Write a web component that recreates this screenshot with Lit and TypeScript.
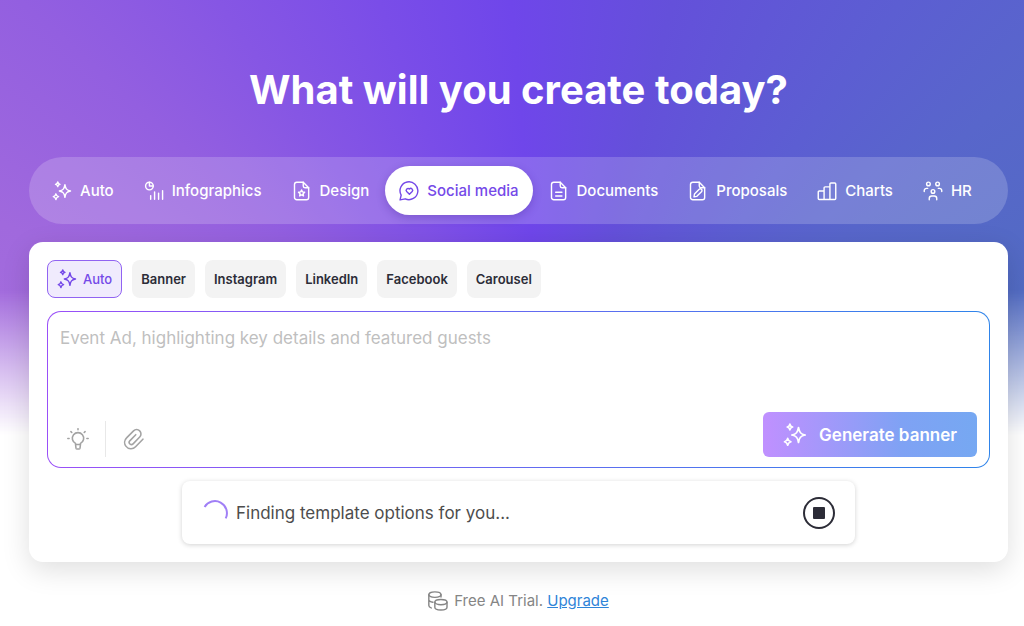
import { LitElement, html, css, svg, type TemplateResult } from "lit";
import { customElement, state } from "lit/decorators.js";
import { classMap } from "lit/directives/class-map.js";

const sparkle = svg`
  <path d="M15.500 4.500c.9 5 2.100 6.500 6.700 7.500-4.600 1-5.800 2.500-6.700 7.500-.9-5-2.100-6.500-6.700-7.500 4.600-1 5.800-2.500 6.700-7.500z"/>
  <path d="M6.900 1.200c.4 1.900.9 2.400 2.700 2.800-1.800.4-2.300.9-2.700 2.800-.4-1.900-.9-2.400-2.700-2.800 1.800-.4 2.300-.9 2.700-2.800z"/>
  <path d="M4.700 15.400c.5 2.300 1.200 2.900 3.200 3.400-2 .5-2.700 1.100-3.200 3.400-.5-2.300-1.200-2.900-3.200-3.400 2-.5 2.700-1.100 3.200-3.400z"/>`;

const page = svg`
  <path d="M13.500 1.500H5.700A2.700 2.700 0 0 0 3 4.200v15.600a2.700 2.700 0 0 0 2.700 2.700h11.600a2.700 2.700 0 0 0 2.700-2.700V8z"/>
  <path d="M13.500 1.500V6a2 2 0 0 0 2 2H20"/>`;

const icons: Record<string, TemplateResult<2>> = {
  auto: sparkle,
  infographics: svg`
    <circle cx="6.500" cy="6" r="4.600"/><path d="M6.500 1.400V6h4.600"/>
    <path d="M8 17.500V22M12.700 13v9M17.500 14.500V22M22.300 11.500V22"/>`,
  design: svg`${page}
    <path d="M11.500 10.800l1.100 2.300 2.600.4-1.900 1.800.5 2.600-2.300-1.200-2.300 1.200.5-2.600-1.900-1.800 2.600-.4z"/>`,
  social: svg`
    <path d="M1.300 22.700l1.300-5.800A10.700 10.700 0 1 1 7.500 21.400z"/>
    <path d="M12.500 16l-3.300-3.300a2.200 2.200 0 0 1 3.300-3 2.200 2.200 0 0 1 3.300 3z"/>`,
  documents: svg`${page}<path d="M8 13.500h7.500M8 18h7.500"/>`,
  proposals: svg`${page}
    <path d="M7.200 19l.6-3.400 5.600-5.600a1.900 1.900 0 0 1 2.800 2.800l-5.600 5.600z"/>`,
  charts: svg`
    <path d="M8.500 22.200V8.200A1.200 1.200 0 0 1 9.700 7h5.800M8.500 12H2.700a1.200 1.200 0 0 0-1.200 1.200V21a1.200 1.200 0 0 0 1.200 1.200h18.600a1.200 1.200 0 0 0 1.200-1.200V3.500a1.200 1.200 0 0 0-1.200-1.200h-4.600a1.200 1.200 0 0 0-1.200 1.200v18.700"/>`,
  hr: svg`
    <circle cx="6.500" cy="3.500" r="2.200"/><circle cx="17.500" cy="3.500" r="2.200"/><circle cx="12" cy="12.500" r="2.200"/>
    <path d="M1.500 12.500v-1a2.700 2.700 0 0 1 2.700-2.700h1.500M22.500 12.500v-1a2.700 2.700 0 0 0-2.700-2.700h-1.500M7.500 22.500V21a3 3 0 0 1 3-3h3a3 3 0 0 1 3 3v1.500"/>`,
  bulb: svg`
    <path d="M9.300 18v-1.200a6.200 6.200 0 1 1 5.400 0V18zM9.300 18l.5 4a1.300 1.300 0 0 0 1.300 1h1.800a1.300 1.300 0 0 0 1.300-1l.5-4"/>
    <path d="M12 .8v1.200M4.300 4l.9.900M19.700 4l-.9.900M.9 11.500h1.400M21.700 11.500h1.400"/>`,
  clip: svg`
    <path d="M22.800 12.200l-8 8.300a6.900 6.900 0 0 1-10.600-.7 6.900 6.900 0 0 1 .8-9l7.600-7.700a4.700 4.700 0 0 1 6.700 0 4.700 4.700 0 0 1 0 6.700l-7.200 7.500a2.400 2.400 0 0 1-3.600-3.300l6.500-6.700"/>`,
  coins: svg`
    <ellipse cx="8.300" cy="4.300" rx="7.300" ry="3.300"/>
    <path d="M1 4.300v13.200c0 1.300 1 2.200 2.800 2.800M1 10.500c0 1.500 2 2.600 5 3M15.600 4.300v3"/>
    <ellipse cx="15.500" cy="13.300" rx="7.300" ry="3.200"/>
    <path d="M8.200 13.300v6.200c0 1.900 3.300 3.300 7.300 3.300s7.300-1.400 7.300-3.300v-6.200"/>`,
};

const icon = (name: string, size = "md") =>
  html`<svg class="icon ${size}" viewBox="0 0 24 24" aria-hidden="true">${icons[name]}</svg>`;

@customElement("app-root")
export class AppRoot extends LitElement {
  @state() private category = "social";
  @state() private format = "Auto";

  private categories = [
    ["auto", "Auto"],
    ["infographics", "Infographics"],
    ["design", "Design"],
    ["social", "Social media"],
    ["documents", "Documents"],
    ["proposals", "Proposals"],
    ["charts", "Charts"],
    ["hr", "HR"],
  ];

  private formats = ["Auto", "Banner", "Instagram", "LinkedIn", "Facebook", "Carousel"];

  static styles = css`
    :host {
      display: block;
      position: relative;
      min-height: 100vh;
      box-sizing: border-box;
      padding: 64px 16px 12px 29px;
      background: #fff;
      font-family: Inter, "Liberation Sans", sans-serif;
      overflow: hidden;
    }
    *, *::before { box-sizing: border-box; }
    :host::before {
      content: "";
      position: absolute;
      inset: 0 0 auto 0;
      height: 440px;
      background: conic-gradient(from -90deg at 54% 480px,
        #a870dc 0deg, #a069dd 25deg, #935fe0 42deg, #8656e4 55deg, #7a4de8 70deg, #6f46ea 85deg,
        #6450da 104deg, #5c5ed2 126deg, #5866cb 140deg, #526bc3 158deg, #4f6cc0 180deg, #a870dc 360deg);
      mask-image: linear-gradient(#000 290px, transparent 435px);
    }
    button { font: inherit; border: 0; margin: 0; cursor: pointer; }
    main { position: relative; }
    h1 {
      margin: 0 0 41px;
      font-size: 40px;
      line-height: 52px;
      font-weight: 700;
      text-align: center;
      color: #fff;
    }
    .icon {
      flex: none;
      fill: none;
      stroke: currentColor;
      stroke-width: 1.7;
      stroke-linecap: round;
      stroke-linejoin: round;
    }
    .md { width: 20px; height: 20px; }
    .tl { width: 22px; height: 22px; }
    .lg { width: 24px; height: 24px; }
    .tabs {
      display: flex;
      align-items: center;
      gap: 2px;
      padding: 9px;
      border-radius: 34px;
      background: rgba(255, 255, 255, .18);
    }
    .tab {
      display: flex;
      align-items: center;
      gap: 8px;
      height: 49px;
      padding: 0 14px;
      border-radius: 25px;
      background: none;
      color: #fff;
      font-size: 15px;
      font-weight: 500;
      white-space: nowrap;
    }
    .tab.on {
      background: #fff;
      color: #7549e8;
      box-shadow: 0 3px 8px rgba(50, 20, 130, .25);
    }
    .card {
      margin-top: 18px;
      padding: 18px;
      border-radius: 14px;
      background: #fff;
      box-shadow: 0 8px 28px rgba(0, 0, 0, .13);
    }
    .chips { display: flex; gap: 10px; margin-bottom: 13px; }
    .chip {
      display: flex;
      align-items: center;
      gap: 6px;
      height: 38px;
      padding: 0 9px;
      border-radius: 8px;
      background: #f3f3f3;
      color: #2c2c37;
      font-size: 13px;
      font-weight: 600;
    }
    .chip.on {
      border: 1px solid #9163f2;
      background: #f0ebfd;
      color: #7549e8;
      font-weight: 500;
    }
    .prompt {
      display: flex;
      flex-direction: column;
      border: 1px solid transparent;
      border-radius: 14px;
      padding: 12px 12px 10px;
      background:
        linear-gradient(#fff, #fff) padding-box,
        linear-gradient(90deg, #9a4ff8, #2f84ea) border-box;
    }
    textarea {
      display: block;
      width: 100%;
      height: 88px;
      padding: 0;
      border: 0;
      outline: 0;
      resize: none;
      background: none;
      color: #2c2c37;
      font: 400 17px/28px Inter, sans-serif;
    }
    textarea::placeholder { color: #bfbfbf; opacity: 1; }
    .actions { display: flex; align-items: flex-end; }
    .tool {
      display: grid;
      place-items: center;
      width: 36px;
      height: 36px;
      padding: 0;
      background: none;
      color: #a3a3a3;
    }
    .sep { width: 1px; height: 36px; margin: 0 9px; background: #e8e8e8; }
    .generate {
      display: flex;
      align-items: center;
      gap: 12px;
      height: 45px;
      margin-left: auto;
      padding: 0 20px;
      border-radius: 6px;
      background: linear-gradient(90deg, #c090ff, #7fa2f4 65%, #76a8f2);
      color: #fff;
      font-size: 17px;
      font-weight: 600;
    }
    .status {
      display: flex;
      align-items: center;
      gap: 8px;
      width: 72%;
      max-width: 673px;
      height: 63px;
      margin: 13px auto 0;
      padding: 0 20px;
      border-radius: 8px;
      background: #fff;
      box-shadow: 0 1px 5px rgba(0, 0, 0, .18);
      color: #4d4d4d;
      font-size: 17px;
    }
    .spinner { width: 26px; height: 26px; fill: none; stroke: #a07ff6; stroke-width: 2; }
    .stop {
      display: grid;
      place-items: center;
      width: 32px;
      height: 32px;
      margin-left: auto;
      padding: 0;
      border: 2px solid #2c2c37;
      border-radius: 50%;
      background: #fff;
    }
    .stop i { width: 12px; height: 12px; border-radius: 1px; background: #2c2c37; }
    footer {
      display: flex;
      align-items: center;
      justify-content: center;
      gap: 6px;
      margin-top: 28px;
      font-size: 15px;
      line-height: 22px;
      color: #858585;
    }
    footer a { color: #2f84d8; }
  `;

  render() {
    return html`
      <main>
        <h1>What will you create today?</h1>
        <nav class="tabs" aria-label="Category">
          ${this.categories.map(([id, label]) => html`
            <button class=${classMap({ tab: true, on: id === this.category })}
              @click=${() => (this.category = id)}>${icon(id)}<span>${label}</span></button>`)}
        </nav>
        <section class="card">
          <div class="chips">
            ${this.formats.map((f) => html`
              <button class=${classMap({ chip: true, on: f === this.format })}
                @click=${() => (this.format = f)}>${f === "Auto" ? icon("auto") : null}<span>${f}</span></button>`)}
          </div>
          <div class="prompt">
            <textarea aria-label="Describe your design"
              placeholder="Event Ad, highlighting key details and featured guests"></textarea>
            <div class="actions">
              <button class="tool" aria-label="Ideas">${icon("bulb", "tl")}</button>
              <span class="sep"></span>
              <button class="tool" aria-label="Attach file">${icon("clip", "tl")}</button>
              <button class="generate">${icon("auto", "lg")}<span>Generate banner</span></button>
            </div>
          </div>
          <div class="status" role="status">
            <svg class="spinner" viewBox="0 0 26 26" aria-hidden="true"><path d="M2.600 7A12 12 0 0 1 23.700 18.400"/></svg>
            <span>Finding template options for you...</span>
            <button class="stop" aria-label="Stop"><i></i></button>
          </div>
        </section>
        <footer>
          ${icon("coins")}
          <span>Free AI Trial. <a href="#upgrade">Upgrade</a></span>
        </footer>
      </main>`;
  }
}
